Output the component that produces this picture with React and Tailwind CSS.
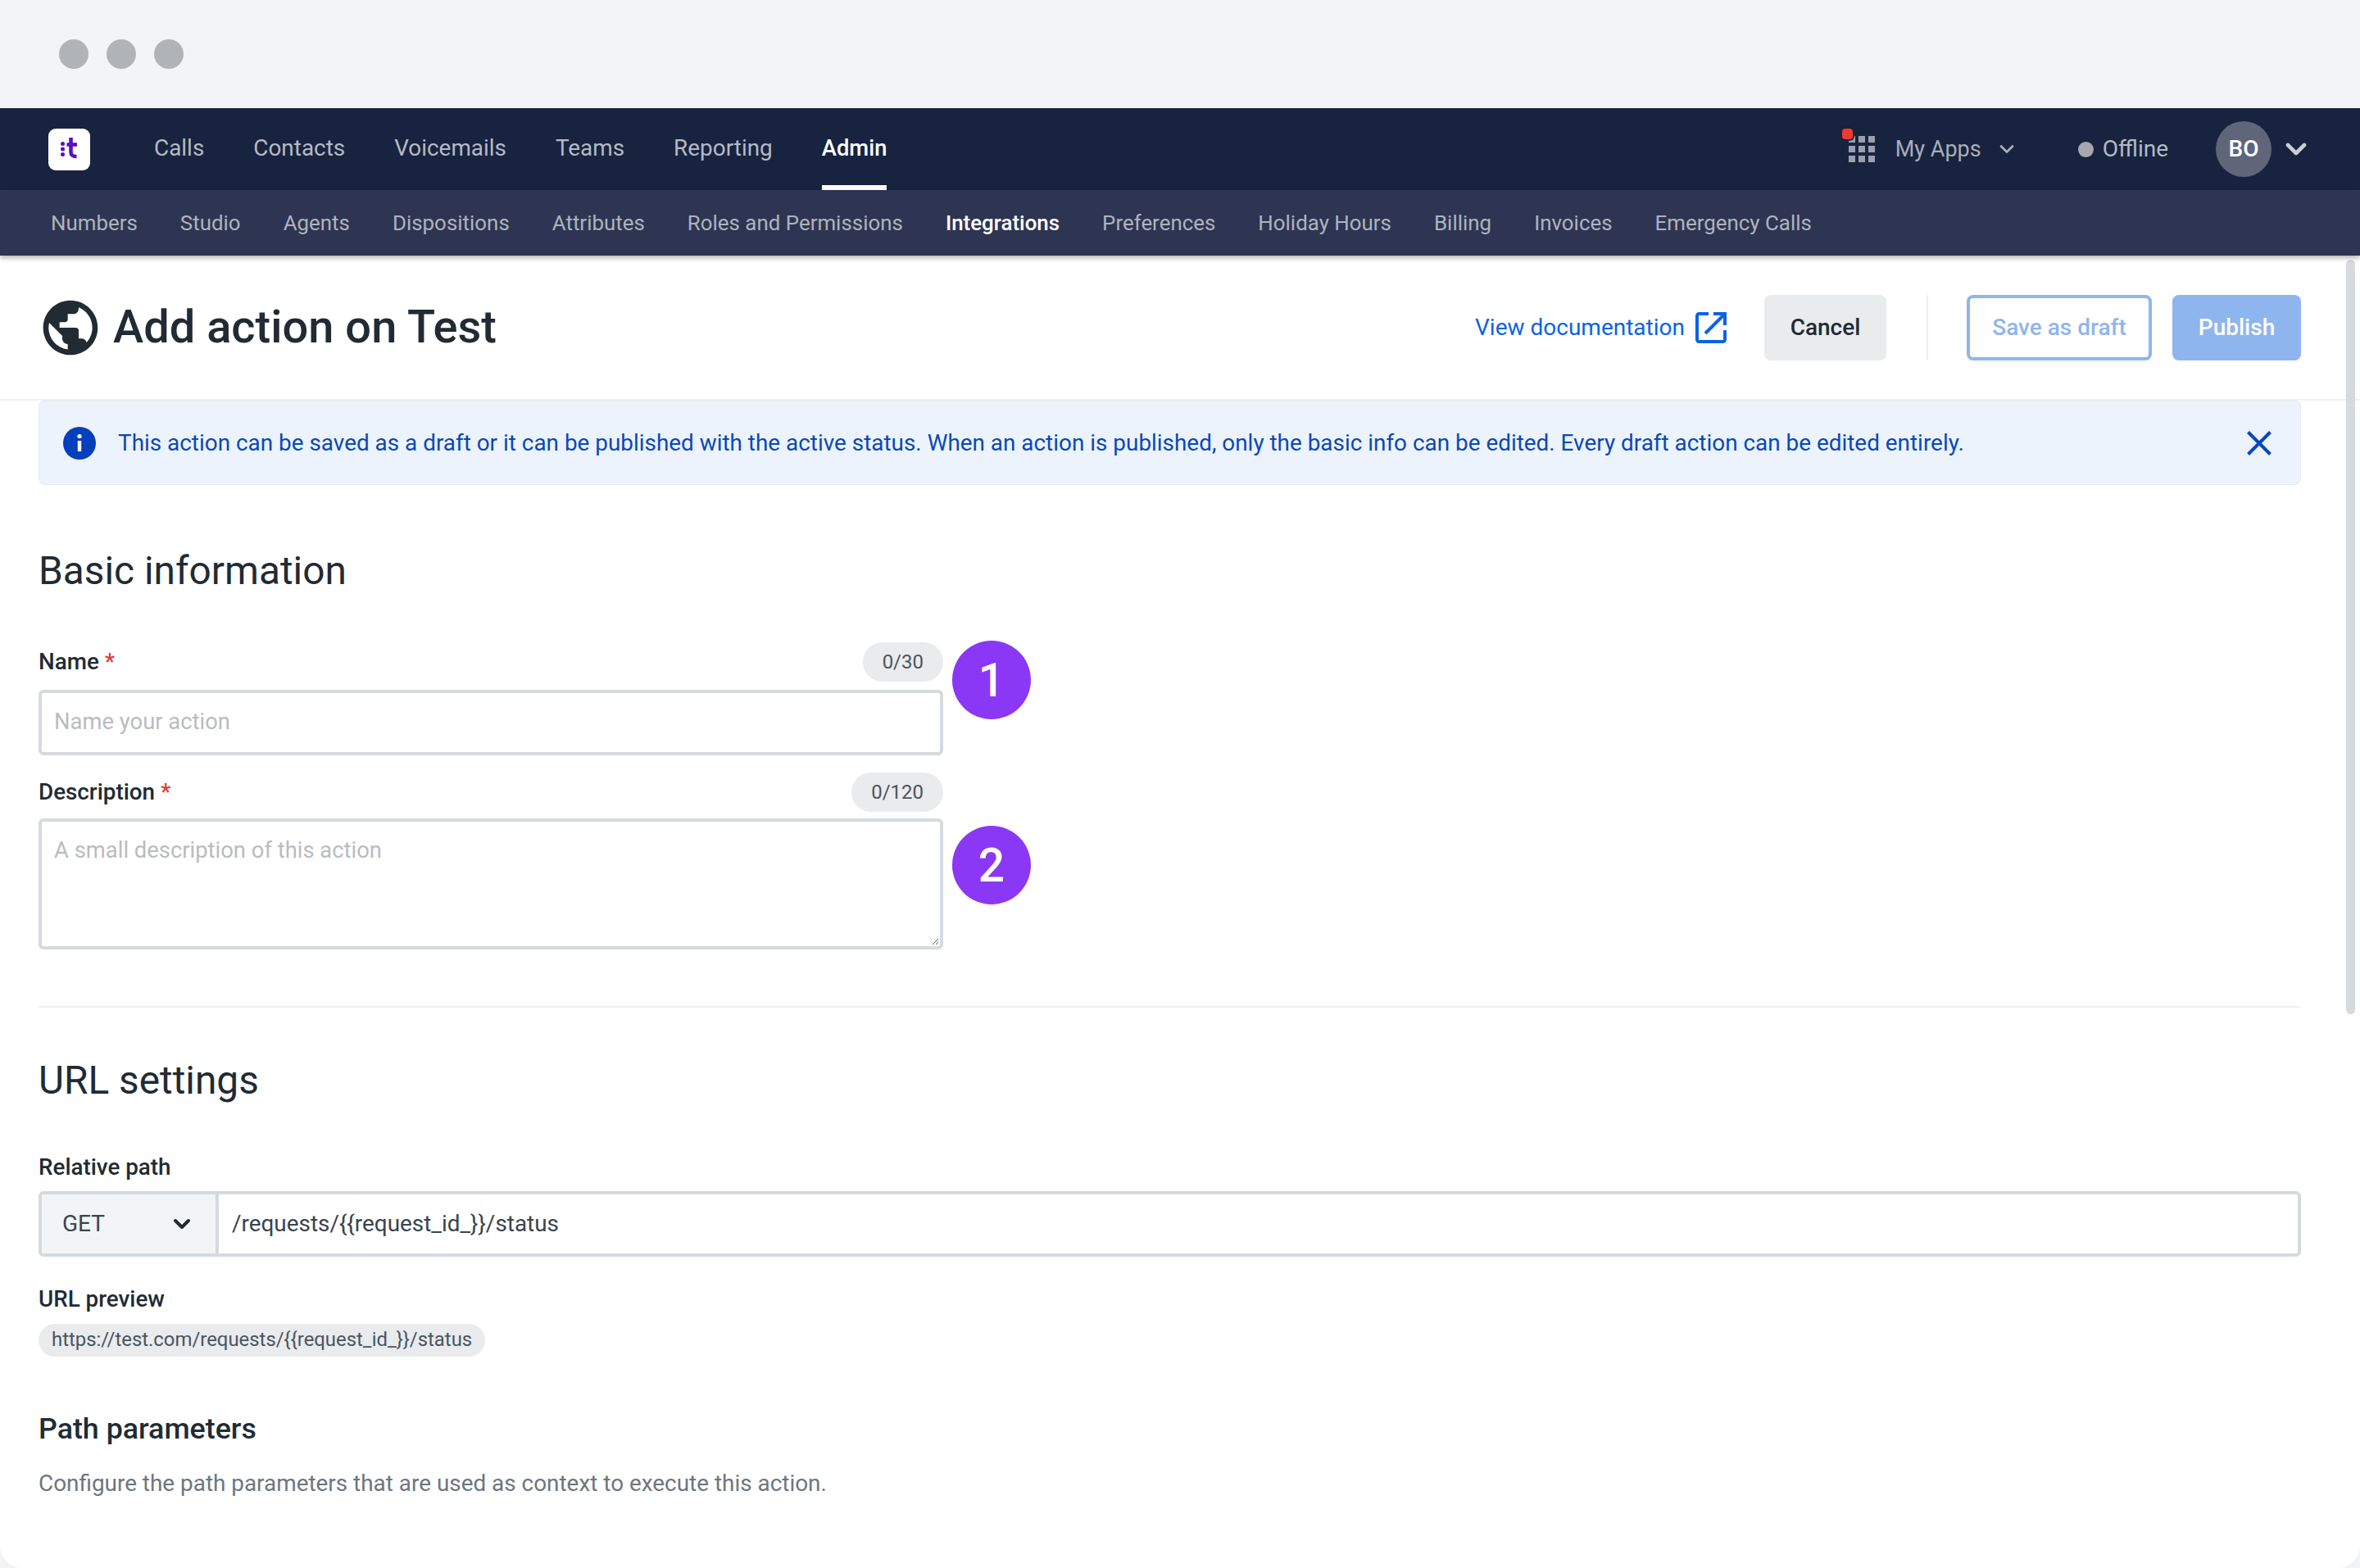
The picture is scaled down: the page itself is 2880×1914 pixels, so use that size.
import React from "react";
import { ChevronDown } from "lucide-react";

const main = ["Calls", "Contacts", "Voicemails", "Teams", "Reporting"];
const sub = ["Numbers", "Studio", "Agents", "Dispositions", "Attributes", "Roles and Permissions", "Integrations", "Preferences", "Holiday Hours", "Billing", "Invoices", "Emergency Calls"];

function Globe() {
  return (
    <svg viewBox="0 0 24 24" className="w-[80px] h-[80px] shrink-0 -ml-[1px]" fill="#212b33">
      <path d="M12 2C6.48 2 2 6.48 2 12s4.48 10 10 10 10-4.48 10-10S17.52 2 12 2zm-1 17.93c-3.95-.49-7-3.85-7-7.93 0-.62.08-1.21.21-1.79L9 15v1c0 1.1.9 2 2 2v1.93zm6.9-2.54c-.26-.81-1-1.39-1.9-1.39h-1v-3c0-.55-.45-1-1-1H8v-2h2c.55 0 1-.45 1-1V7h2c1.1 0 2-.9 2-2v-.41c2.93 1.19 5 4.06 5 7.41 0 2.08-.8 3.97-2.1 5.39z" />
    </svg>
  );
}

function Logo() {
  return (
    <div className="w-[51px] h-[51px] rounded-[9px] bg-white flex items-center justify-center">
      <svg viewBox="0 0 51 51" className="w-[51px] h-[51px]">
        <circle cx="17.5" cy="18.5" r="2.5" fill="#5b0fc4" />
        <circle cx="17.5" cy="25" r="2.5" fill="#5b0fc4" />
        <circle cx="17.5" cy="31.5" r="2.5" fill="#5b0fc4" />
        <path d="M27.5 11v17.5c0 4 2 5.5 7 5.5M22.5 19.5H35" fill="none" stroke="#5b0fc4" strokeWidth="4.6" />
      </svg>
    </div>
  );
}

function Grid() {
  return (
    <div className="relative w-[32px] h-[32px] grid grid-cols-3 gap-[4px]">
      {Array.from({ length: 9 }).map((_, i) => (
        <span key={i} className="bg-[#9aa0ad]" />
      ))}
      <span className="absolute -left-[8px] -top-[9px] w-[13px] h-[13px] rounded-[4px] bg-[#f03a2e] ring-[2px] ring-[#18233f]" />
    </div>
  );
}

function Label({ children, req }) {
  return (
    <span className="text-[27.8px] leading-[32px] font-medium text-[#212b33]">
      {children}
      {req && <span className="text-[#e5392d] ml-[7px]">*</span>}
    </span>
  );
}

function Section({ children }) {
  return <h2 className="text-[47.8px] leading-[56px] font-normal text-[#212b33]">{children}</h2>;
}

function Badge({ n, className }) {
  return (
    <div className={`w-[96px] h-[96px] rounded-full bg-[#8a38f5] text-white text-[57px] font-medium leading-none flex items-center justify-center shrink-0 ${className}`}>
      {n}
    </div>
  );
}

export default function App() {
  return (
    <div className="w-[2880px] h-[1914px] bg-[#f3f4f6] flex flex-col overflow-hidden font-['Roboto',sans-serif]">
      <div className="h-[132px] flex items-center gap-[22px] pl-[72px] shrink-0">
        {[0, 1, 2].map((i) => (
          <span key={i} className="w-[36px] h-[36px] rounded-full bg-[#aeb4b8]" />
        ))}
      </div>

      <header className="h-[100px] bg-[#18233f] flex items-center pl-[59px] pr-[58px] shrink-0">
        <Logo />
        <nav className="flex items-center gap-[60px] ml-[78px] h-full text-[27.9px]">
          {main.map((m) => (
            <a key={m} className="text-[#b4bac4] leading-[100px] h-full -mt-[2px]">{m}</a>
          ))}
          <a className="text-white font-medium text-[27.4px] leading-[100px] h-full relative -mt-[2px]">
            Admin
            <span className="absolute left-0 right-0 -bottom-[2px] h-[7px] bg-white" />
          </a>
        </nav>
        <div className="ml-auto flex items-center">
          <Grid />
          <span className="text-[27px] text-[#a8aeb9] ml-[25px]">My Apps</span>
          <ChevronDown size={28} strokeWidth={2.4} className="text-[#a8aeb9] ml-[17px]" />
          <span className="w-[19px] h-[19px] rounded-full bg-[#a6a8ac] ml-[73px]" />
          <span className="text-[28px] text-[#b4bac4] ml-[11px]">Offline</span>
          <div className="w-[68px] h-[68px] rounded-full bg-[#5f6679] text-white text-[28px] font-medium flex items-center justify-center ml-[58px]">BO</div>
          <ChevronDown size={40} strokeWidth={2.8} className="text-[#c9cdd4] ml-[10px]" />
        </div>
      </header>

      <div className="h-[80px] bg-[#2d3552] flex items-center gap-[52px] pl-[62px] shrink-0 shadow-[0_3px_6px_rgba(0,0,0,0.3)] relative z-10">
        {sub.map((s) => (
          <a key={s} className={`text-[25.9px] ${s === "Integrations" ? "text-white font-medium" : "text-[#adb3bf]"}`}>{s}</a>
        ))}
      </div>

      <main className="flex-1 bg-white rounded-b-[28px] relative">
        <div className="absolute right-[6px] top-[5px] w-[11px] h-[921px] rounded-full bg-[#d6dade]" />

        <div className="h-[177px] border-b-[2px] border-[#eff1f2] flex items-center pl-[47px] pr-[72px]">
          <Globe />
          <h1 className="text-[56px] font-medium text-[#212b33] ml-[12px] -mt-[2px] leading-none">Add action on Test</h1>
          <div className="ml-auto flex items-center">
            <a className="text-[28px] text-[#0b63e5] flex items-center">
              View documentation
              <svg viewBox="0 0 38 38" className="w-[38px] h-[38px] ml-[13px]" fill="none" stroke="#0b63e5" strokeWidth="4">
                <path d="M16 2H4.5A2.5 2.5 0 0 0 2 4.5v29A2.5 2.5 0 0 0 4.5 36h29a2.5 2.5 0 0 0 2.5-2.5V22M22 2h14v14M36 2 12 26" />
              </svg>
            </a>
            <button className="w-[149px] h-[80px] rounded-[8px] bg-[#e9ebed] text-[#212b33] text-[28px] font-medium ml-[46px]">Cancel</button>
            <span className="w-[2px] h-[80px] bg-[#eceef0] ml-[49px]" />
            <button className="w-[226px] h-[80px] rounded-[8px] border-[4px] border-[#8fb5ee] text-[#8fb5ee] text-[28px] font-medium bg-white ml-[47px]">Save as draft</button>
            <button className="w-[157px] h-[80px] rounded-[8px] bg-[#8fb5ee] text-white text-[28px] font-medium ml-[25px]">Publish</button>
          </div>
        </div>

        <div className="pl-[47px] pr-[72px]">
          <div className="h-[103px] rounded-b-[8px] rounded-t-[6px] bg-[#ecf3fc] border border-[#e3ecf8] flex items-center pl-[29px] pr-[35px]">
            <svg viewBox="0 0 40 40" className="w-[40px] h-[40px] shrink-0">
              <circle cx="20" cy="20" r="20" fill="#0540bc" />
              <circle cx="20" cy="11.5" r="2.6" fill="#fff" />
              <rect x="17.8" y="17" width="4.4" height="13" fill="#fff" />
            </svg>
            <p className="text-[#0a48b8] text-[27.9px] ml-[27px] whitespace-nowrap">This action can be saved as a draft or it can be published with the active status. When an action is published, only the basic info can be edited. Every draft action can be edited entirely.</p>
            <svg viewBox="0 0 30 30" className="w-[30px] h-[30px] ml-auto shrink-0" fill="none" stroke="#0a48b8" strokeWidth="4">
              <path d="M1.5 1.5 28.5 28.5M28.5 1.5 1.5 28.5" />
            </svg>
          </div>

          <div className="mt-[77px]"><Section>Basic information</Section></div>

          <div className="w-[1104px] mt-[59px] flex items-center justify-between h-[48px]">
            <Label req>Name</Label>
            <span className="px-[24px] h-[48px] flex items-center rounded-full bg-[#e9ebed] text-[#4a5560] text-[24px]">0/30</span>
          </div>
          <div className="flex items-start gap-[11px] relative mt-[10px]">
            <div className="w-[1104px] h-[80px] border-[4px] border-[#d6dade] rounded-[6px] flex items-center pl-[15px] text-[27.4px] text-[#b8bcc0]">Name your action</div>
            <Badge n="1" className="-mt-[60px]" />
          </div>

          <div className="w-[1104px] mt-[21px] flex items-center justify-between h-[48px]">
            <Label req>Description</Label>
            <span className="px-[24px] h-[48px] flex items-center rounded-full bg-[#e9ebed] text-[#4a5560] text-[24px]">0/120</span>
          </div>
          <div className="flex items-start gap-[11px] relative mt-[8px]">
            <div className="w-[1104px] h-[160px] border-[4px] border-[#d6dade] rounded-[6px] pl-[15px] pt-[19px] text-[27.4px] leading-[32px] text-[#b8bcc0] relative">
              A small description of this action
              <svg viewBox="0 0 10 10" className="absolute right-[1px] bottom-[1px] w-[10px] h-[10px]" stroke="#555" strokeWidth="1" fill="none">
                <path d="M9 2 2 9M9 6 6 9" />
              </svg>
            </div>
            <Badge n="2" className="mt-[9px]" />
          </div>

          <div className="h-[2px] bg-[#eeeff1] mt-[69px]" />

          <div className="mt-[61px]"><Section>URL settings</Section></div>

          <div className="mt-[62px]"><Label>Relative path</Label></div>
          <div className="mt-[13px] h-[80px] flex border-[4px] border-[#d6dade] rounded-[6px] overflow-hidden">
            <div className="w-[216px] bg-[#f3f4f6] border-r-[4px] border-[#d6dade] flex items-center justify-between pl-[25px] pr-[25px] text-[28px] text-[#3a444d]">
              GET
              <ChevronDown size={32} strokeWidth={3} className="text-[#212b33]" />
            </div>
            <div className="flex-1 flex items-center pl-[16px] text-[27.9px] text-[#3a444d]">{"/requests/{{request_id_}}/status"}</div>
          </div>

          <div className="mt-[36px]"><Label>URL preview</Label></div>
          <div className="mt-[14px] inline-flex h-[40px] items-center rounded-full bg-[#e9ebed] px-[16px] text-[23.9px] text-[#4a5560]">{"https://test.com/requests/{{request_id_}}/status"}</div>

          <h3 className="mt-[68px] text-[35.8px] leading-[40px] font-medium text-[#212b33]">Path parameters</h3>
          <p className="mt-[27px] text-[27.9px] leading-[40px] text-[#6d767e]">Configure the path parameters that are used as context to execute this action.</p>
        </div>
      </main>
    </div>
  );
}
